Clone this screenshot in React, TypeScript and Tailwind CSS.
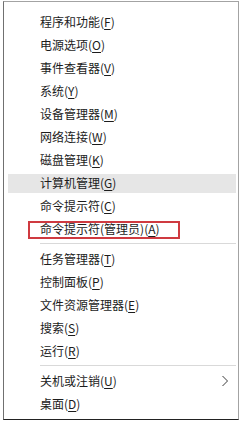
import React from "react";

type Item = { label: string; key: string; sub?: boolean };

const groups: Item[][] = [
  [
    { label: "程序和功能", key: "F" },
    { label: "电源选项", key: "O" },
    { label: "事件查看器", key: "V" },
    { label: "系统", key: "Y" },
    { label: "设备管理器", key: "M" },
    { label: "网络连接", key: "W" },
    { label: "磁盘管理", key: "K" },
    { label: "计算机管理", key: "G" },
    { label: "命令提示符", key: "C" },
    { label: "命令提示符(管理员)", key: "A" },
  ],
  [
    { label: "任务管理器", key: "T" },
    { label: "控制面板", key: "P" },
    { label: "文件资源管理器", key: "E" },
    { label: "搜索", key: "S" },
    { label: "运行", key: "R" },
  ],
  [
    { label: "关机或注销", key: "U", sub: true },
    { label: "桌面", key: "D" },
  ],
];

const Row: React.FC<{ item: Item }> = ({ item }) => {
  const hot = item.key === "G";
  const marked = item.key === "A";
  return (
    <div className="relative h-[23px] flex items-center">
      {hot && <div className="absolute left-[4px] right-[2px] top-[3px] bottom-[1px] bg-[#e6e6e6]" />}
      <span className="relative pl-[36px] text-[12px] leading-none text-[#1c1c1c]">
        {item.label}(<span className="underline underline-offset-2">{item.key}</span>)
      </span>
      {marked && (
        <div className="absolute left-[24px] top-[4px] w-[152px] h-[18px] border-2 border-[#cf3a40]" />
      )}
      {item.sub && (
        <svg className="absolute left-[217px] top-[6px]" width="8" height="12" viewBox="0 0 8 12">
          <polyline points="1.5,1 6.5,6 1.5,11" fill="none" stroke="#3a3a3a" strokeWidth="1" />
        </svg>
      )}
    </div>
  );
};

export default function App() {
  return (
    <div
      className="w-[243px] h-[424px] bg-white pt-px pl-[3px]"
      style={{ fontFamily: '"Noto Sans CJK SC", "Noto Sans", sans-serif' }}
    >
      <div className="w-[236px] h-[419px] bg-white border border-[#a3a3a3] border-l-[#707070] border-b-[#222222] pt-[8px]">
        {groups.map((g, gi) => (
          <div key={gi}>
            {gi > 0 && (
              <div className="py-[3px] pl-[36px] pr-[2px]">
                <div className="h-px bg-[#d9d9d9]" />
              </div>
            )}
            {g.map((item) => (
              <Row key={item.key} item={item} />
            ))}
          </div>
        ))}
      </div>
    </div>
  );
}
